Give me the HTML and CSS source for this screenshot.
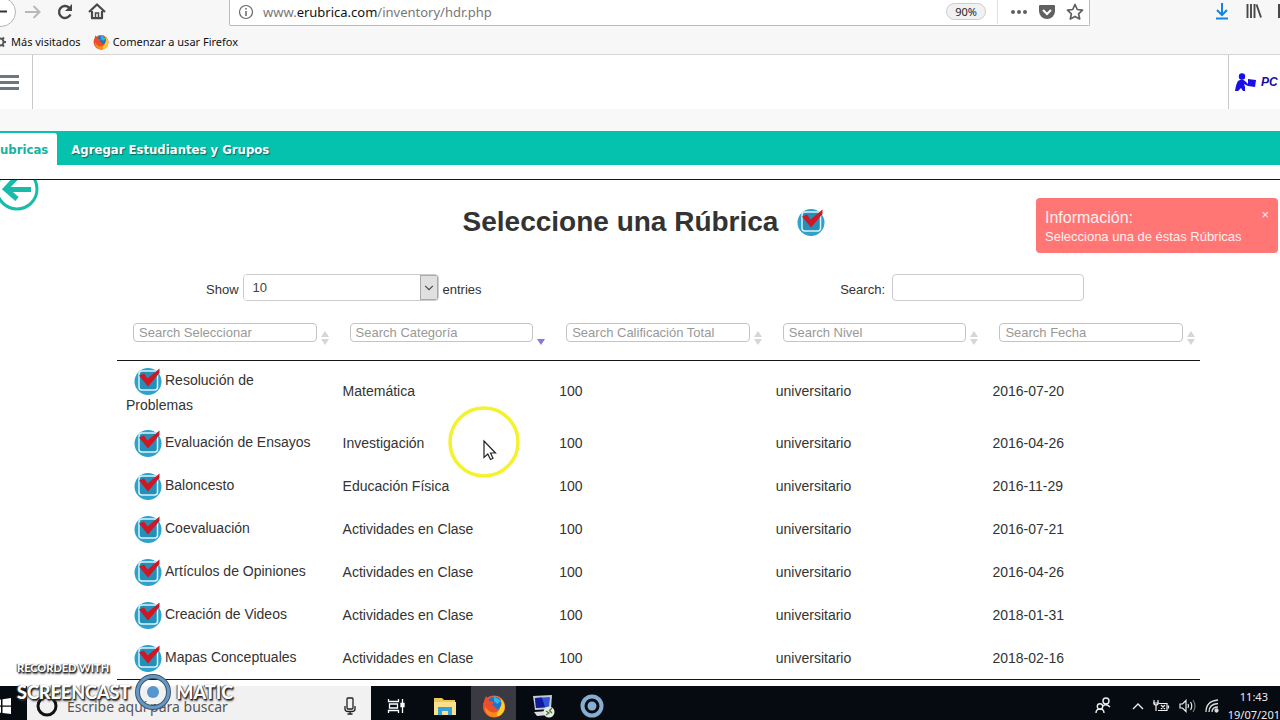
FILE: index.html
```html
<!DOCTYPE html>
<html lang="es">
<head>
<meta charset="utf-8">
<title>Rúbricas</title>
<link rel="stylesheet" href="styles.css">
</head>
<body>
<svg class="defs" aria-hidden="true">
  <defs>
    <symbol id="check" viewBox="0 0 28 28">
      <circle cx="14" cy="14.5" r="13.5" fill="#2ba3cb"/>
      <rect x="5" y="4" width="18.500" height="19" rx="3" fill="#258fb8" stroke="#d9f3fb" stroke-width="1.5"/>
      <path d="M5 8.500 L10 6.500 L13.500 11.500 L25.500 1.500 L25.500 6 L14 19.500 Z" fill="#cf1726"/>
    </symbol>
    <symbol id="fox" viewBox="0 0 24 24">
      <circle cx="12" cy="12.500" r="11" fill="#f0502a"/>
      <path d="M8 4 C13 -1 22 4 23 12 C23.500 19 17 24 11 23 C5 22 2 17 3 12 Z" fill="#fb8a1c"/>
      <path d="M19 5 C24 10 24 18 17 22 C12 23 17 16 18 12Z" fill="#ffcf2e"/>
      <circle cx="12.500" cy="9.500" r="7" fill="#2374c6"/>
      <path d="M12 2 L19 7 L15 10 L12 7Z" fill="#30b5e8"/>
      <path d="M1 11 C2 7 3 4 4 2 L7 7 L12 8 L10 11 L13 13 C14 16 17 15 18 14 C17 19 9 20 6 16Z" fill="#ee4c2a"/>
    </symbol>
    <symbol id="sort" viewBox="0 0 8 14"><path d="M4 0 L8 6 H0Z M0 8 H8 L4 14Z" fill="#d6d6d8"/></symbol>
    <symbol id="sorted" viewBox="0 0 8 14"><path d="M0 8 H8 L4 14Z" fill="#8479dc"/></symbol>
  </defs>
</svg>

<div class="browser">
  <div class="toolbar">
    <div class="nav-buttons">
      <button class="bare" aria-label="Atrás"><svg width="16" height="28" viewBox="0 0 16 28"><circle cx="1" cy="12" r="14.500" fill="#fff" stroke="#b5b5b5"/><path d="M-4 11.500H7" stroke="#333" stroke-width="2"/></svg></button>
      <button class="bare" aria-label="Adelante"><svg width="18" height="24" viewBox="0 0 18 24"><path d="M1 12H15M9.500 6L15.500 12L9.500 18" fill="none" stroke="#b9b9b9" stroke-width="2"/></svg></button>
      <button class="bare" aria-label="Recargar"><svg width="18" height="24" viewBox="0 0 18 24"><path d="M14.500 14.500A6 6 0 1 1 13 7.500" fill="none" stroke="#484848" stroke-width="2.400"/><path d="M16 4V11H9Z" fill="#484848"/></svg></button>
      <button class="bare" aria-label="Inicio"><svg width="18" height="24" viewBox="0 0 18 24"><path d="M1 12L9 4.500L17 12M4 11V18.200H14V11" fill="none" stroke="#484848" stroke-width="2.200" stroke-linejoin="round"/><path d="M7.500 18V13H10.500V18" fill="none" stroke="#484848" stroke-width="1.500"/></svg></button>
    </div>
    <div class="urlbar">
      <svg width="16" height="16" viewBox="0 0 16 16"><circle cx="8" cy="8" r="6.500" fill="none" stroke="#666" stroke-width="1.200"/><path d="M8 7V12M8 4V5.500" stroke="#666" stroke-width="1.500"/></svg>
      <span class="url">www.<b>erubrica.com</b>/inventory/hdr.php</span>
      <button class="zoom">90%</button>
      <div class="url-actions">
        <svg width="18" height="18" viewBox="0 0 18 18" fill="#606060"><circle cx="3" cy="9" r="2"/><circle cx="9" cy="9" r="2"/><circle cx="15" cy="9" r="2"/></svg>
        <svg width="18" height="18" viewBox="0 0 18 18"><path d="M1 3Q1 2 2 2H16Q17 2 17 3V8A8 8 0 0 1 1 8Z" fill="#606060"/><path d="M5 7L9 11L13 7" fill="none" stroke="#fff" stroke-width="2"/></svg>
        <svg width="18" height="18" viewBox="0 0 18 18"><path d="M9 1.500L11.300 6.500L16.500 7.100L12.600 10.800L13.700 16L9 13.400L4.300 16L5.400 10.800L1.500 7.100L6.700 6.500Z" fill="none" stroke="#606060" stroke-width="1.700" stroke-linejoin="round"/></svg>
      </div>
    </div>
    <div class="tools">
      <svg width="16" height="20" viewBox="0 0 16 20"><path d="M8 2V14M3 9L8 14L13 9M2 17.500H14" fill="none" stroke="#1683e2" stroke-width="2"/></svg>
      <svg width="16" height="20" viewBox="0 0 16 20"><path d="M1.500 3V17M5 3V17M8.500 3V17M10.500 3.500L15 16.500" fill="none" stroke="#484848" stroke-width="1.900"/></svg>
      <svg width="2" height="20" viewBox="0 0 2 20"><path d="M1 3V17" stroke="#484848" stroke-width="2"/></svg>
    </div>
  </div>
  <div class="bookmarks">
    <a href="#"><svg width="7" height="14" viewBox="0 0 7 14"><circle cx="0" cy="7" r="3.500" fill="none" stroke="#555" stroke-width="2"/><path d="M3 7H6M2 4.500L4 2.500M2 9.500L4 11.500" stroke="#555" stroke-width="2"/></svg>Más visitados</a>
    <a href="#"><svg width="16" height="16"><use href="#fox"/></svg>Comenzar a usar Firefox</a>
  </div>
</div>

<header class="site-header">
  <button class="menu" aria-label="Menú"><span></span><span></span><span></span></button>
  <a class="brand" href="#"><svg width="21" height="18" viewBox="0 0 21 18" fill="#1a0fe8"><circle cx="7" cy="3.500" r="3.200"/><path d="M3 8Q7 5 10 8L13 11H17L13 13L9 11L10 14V18H8L6 15L3 18H0Q1 11 3 8Z"/><path d="M13 6L21 7L20 14L13 13Z"/></svg><span>PC</span></a>
</header>

<nav class="tabs">
  <a class="tab active" href="#">ubricas</a>
  <a class="tab" href="#">Agregar Estudiantes y Grupos</a>
</nav>

<main class="content">
  <button class="back bare" aria-label="Volver"><svg width="40" height="32" viewBox="0 0 40 32"><circle cx="17" cy="9" r="20" fill="#fff" stroke="#16bca8" stroke-width="3"/><path d="M31 9.500H6" stroke="#16bca8" stroke-width="5"/><path d="M16 -2L5.500 9L17 19" fill="none" stroke="#16bca8" stroke-width="5"/></svg></button>
  <aside class="toast">
    <div><strong>Información:</strong><p>Selecciona una de éstas Rúbricas</p></div>
    <button class="bare" aria-label="Cerrar">×</button>
  </aside>
  <h1>Seleccione una Rúbrica <svg width="28" height="28"><use href="#check"/></svg></h1>

  <section class="data">
    <div class="controls">
      <label>Show
        <span class="select"><select><option>10</option><option>25</option></select><svg width="18" height="27" viewBox="0 0 18 27"><path d="M4.500 11.500L9 16L13.500 11.500" fill="none" stroke="#444" stroke-width="1.300"/></svg></span>
        entries</label>
      <label class="find">Search: <input type="search"></label>
    </div>
    <table>
      <thead>
        <tr>
          <th><div><input placeholder="Search Seleccionar" aria-label="Seleccionar"><svg width="8" height="14"><use href="#sort"/></svg></div></th>
          <th><div><input placeholder="Search Categoría" aria-label="Categoría"><svg width="8" height="14"><use href="#sorted"/></svg></div></th>
          <th><div><input placeholder="Search Calificación Total" aria-label="Calificación Total"><svg width="8" height="14"><use href="#sort"/></svg></div></th>
          <th><div><input placeholder="Search Nivel" aria-label="Nivel"><svg width="8" height="14"><use href="#sort"/></svg></div></th>
          <th><div><input placeholder="Search Fecha" aria-label="Fecha"><svg width="8" height="14"><use href="#sort"/></svg></div></th>
        </tr>
      </thead>
      <tbody>
        <tr><td><svg width="28" height="28"><use href="#check"/></svg>Resolución de Problemas</td><td>Matemática</td><td>100</td><td>universitario</td><td>2016-07-20</td></tr>
        <tr><td><svg width="28" height="28"><use href="#check"/></svg>Evaluación de Ensayos</td><td>Investigación</td><td>100</td><td>universitario</td><td>2016-04-26</td></tr>
        <tr><td><svg width="28" height="28"><use href="#check"/></svg>Baloncesto</td><td>Educación Física</td><td>100</td><td>universitario</td><td>2016-11-29</td></tr>
        <tr><td><svg width="28" height="28"><use href="#check"/></svg>Coevaluación</td><td>Actividades en Clase</td><td>100</td><td>universitario</td><td>2016-07-21</td></tr>
        <tr><td><svg width="28" height="28"><use href="#check"/></svg>Artículos de Opiniones</td><td>Actividades en Clase</td><td>100</td><td>universitario</td><td>2016-04-26</td></tr>
        <tr><td><svg width="28" height="28"><use href="#check"/></svg>Creación de Videos</td><td>Actividades en Clase</td><td>100</td><td>universitario</td><td>2018-01-31</td></tr>
        <tr><td><svg width="28" height="28"><use href="#check"/></svg>Mapas Conceptuales</td><td>Actividades en Clase</td><td>100</td><td>universitario</td><td>2018-02-16</td></tr>
      </tbody>
    </table>
  </section>
</main>

<footer class="taskbar">
  <button class="start bare" aria-label="Inicio"><svg width="11" height="16" viewBox="0 0 11 16" fill="#fff"><path d="M0 1.500L1 1.400V7.500H0ZM2.500 1.200L11 0V7.500H2.500ZM0 8.800H1V14.800H0ZM2.500 8.800H11V16L2.500 15Z"/></svg></button>
  <div class="search">
    <svg width="22" height="22" viewBox="0 0 22 22"><circle cx="11" cy="11" r="9" fill="none" stroke="#111" stroke-width="3"/></svg>
    <input placeholder="Escribe aquí para buscar" aria-label="Buscar">
    <svg width="14" height="18" viewBox="0 0 14 18" fill="none" stroke="#222" stroke-width="1.300"><rect x="4" y="1" width="6" height="11" rx="1"/><path d="M2 9V12Q2 14.500 5 14.500H9Q12 14.500 12 12V9M7 14.500V17M4.500 17H9.500"/></svg>
  </div>
  <div class="apps">
    <button class="bare" aria-label="Vista de tareas"><svg width="18" height="18" viewBox="0 0 18 18" fill="none" stroke="#fff" stroke-width="1.300"><path d="M1.500 2V4.500H11.500V2M1.500 16V13.500H11.500V16M2.500 7H10.500V11H2.500ZM15.500 2V16"/><path d="M14 6.500H17V9.500H14Z" fill="#fff"/></svg></button>
    <button class="bare" aria-label="Explorador"><svg width="22" height="20" viewBox="0 0 22 20"><path d="M0 2H8L10 4H21V19H0Z" fill="#efc65a"/><path d="M0 6H22V19H0Z" fill="#fbe08c"/><path d="M4 19V11H18V19H14V15H8V19Z" fill="#35a3da"/></svg></button>
    <button class="bare current" aria-label="Firefox"><svg width="24" height="24"><use href="#fox"/></svg></button>
    <button class="bare" aria-label="Escritorio remoto"><svg width="24" height="24" viewBox="0 0 24 24"><path d="M2 2L21 1L20 15L4 16Z" fill="#c4cbdc"/><path d="M4 4L19 3L18 13L5 14Z" fill="#3157d5"/><path d="M4 4L11 3.500L14 13.300L5 14Z" fill="#101b9c"/><path d="M3 18L16 17L18 21L6 22Z" fill="#d9dbe0"/><circle cx="18" cy="18" r="5.500" fill="#e6ecdf"/><path d="M15 17L18 19L15 21M21 14L18.500 16.500L21 19" fill="none" stroke="#49743c" stroke-width="1.300"/></svg></button>
    <button class="bare" aria-label="Grabador"><svg width="24" height="24" viewBox="0 0 24 24"><circle cx="12" cy="12" r="9.500" fill="none" stroke="#86aed3" stroke-width="4"/><circle cx="12" cy="12" r="4.500" fill="#86aed3"/></svg></button>
  </div>
  <div class="tray">
    <svg width="16" height="18" viewBox="0 0 16 18" fill="none" stroke="#eee" stroke-width="1.400"><circle cx="11" cy="4" r="3"/><circle cx="5" cy="9.500" r="2.700"/><path d="M1 16Q1 12 5 12T9 16M8 9Q11 6 15 10"/></svg>
    <svg width="12" height="8" viewBox="0 0 12 8"><path d="M1 7L6 2L11 7" fill="none" stroke="#eee" stroke-width="1.400"/></svg>
    <svg width="17" height="14" viewBox="0 0 17 14" fill="none" stroke="#eee" stroke-width="1.200"><path d="M1 1V5Q3 7 5 5V1M0 4H6M3 6V12M6 4.500H14V11.500H5M15.500 6.500V9.500M8 6L12 10M12 6L8 10"/></svg>
    <svg width="17" height="14" viewBox="0 0 17 14" fill="none" stroke="#eee" stroke-width="1.200"><path d="M1 5H3.500L7 1.500V12.500L3.500 9H1ZM9 5Q10 7 9 9M11.500 3Q14 7 11.500 11"/><path d="M14 1Q18 7 14 13" stroke="#777"/></svg>
    <svg width="14" height="14" viewBox="0 0 14 14" fill="none" stroke="#ddd" stroke-width="1.300"><path d="M1 13Q1 2 13 1M4 13Q4 5 13 4.500M7 13Q7 8 13 8"/><circle cx="11.500" cy="11.500" r="1.500" fill="#ddd"/></svg>
    <div class="clock"><span>11:43</span><span>19/07/201</span></div>
  </div>
</footer>

<div class="watermark">
  <span class="small">RECORDED WITH</span>
  <div><span>SCREENCAST</span><svg width="36" height="36" viewBox="0 0 36 36"><circle cx="18" cy="18" r="15.500" fill="none" stroke="#3c566d" stroke-width="5"/><circle cx="18" cy="18" r="15.500" fill="none" stroke="#6598c5" stroke-width="3"/><circle cx="18" cy="18" r="6" fill="#5795ce"/></svg><span>MATIC</span></div>
</div>
<svg class="pointer" width="74" height="74" viewBox="0 0 74 74"><circle cx="37" cy="37" r="34" fill="none" stroke="#f4f22c" stroke-width="3.500"/><path d="M37 36V52.500L40.800 49L43.500 54.500L46 53.300L43.500 48H48.500Z" fill="#fff" stroke="#222" stroke-width="1.200"/></svg>
</body>
</html>
```
FILE: styles.css
```css
* { box-sizing: border-box; }
html, body { height: 100%; }
body {
  margin: 0;
  display: flex;
  flex-direction: column;
  overflow: hidden;
  background: #fff;
  color: #333;
  font: 14px/20px "Liberation Sans", Arial, sans-serif;
}
svg { flex: none; }
a { color: inherit; text-decoration: none; }
.defs { position: absolute; width: 0; height: 0; }
.bare { display: flex; padding: 0; border: 0; background: none; color: inherit; }

.browser { flex: none; background: #f7f7f8; border-bottom: 1px solid #d5d5d7; color: #111; font-family: "Noto Sans", sans-serif; }
.toolbar { display: flex; height: 28px; align-items: flex-start; }
.nav-buttons { display: flex; gap: 14px; width: 229px; }
.nav-buttons .bare:first-child { margin-right: -6px; }
.urlbar {
  flex: 1;
  display: flex;
  align-items: center;
  height: 26px;
  padding: 0 5px 2px 8px;
  background: #fff;
  border: 1px solid #bbb;
  border-top: 0;
  border-radius: 0 0 2px 2px;
}
.url { flex: 1; margin-left: 9px; color: #777; font-size: 13px; }
.url b { color: #111; font-weight: 400; }
.zoom { height: 17px; padding: 0 8px; margin-right: 11px; border: 1px solid #ccc; border-radius: 9px; background: #f1f1f3; font: 11px/15px "Noto Sans", sans-serif; color: #222; }
.url-actions { display: flex; gap: 10px; height: 24px; align-items: center; padding-left: 12px; border-left: 1px solid #e0e0e0; }
.tools { display: flex; justify-content: flex-end; gap: 16px; width: 190px; padding-top: 1px; }
.bookmarks { display: flex; gap: 12px; height: 26px; align-items: center; padding-top: 2px; font-size: 11px; }
.bookmarks a { display: flex; gap: 4px; align-items: center; }

.site-header { flex: none; display: flex; justify-content: space-between; height: 54px; background: #fff; }
.menu { display: flex; flex-direction: column; justify-content: center; gap: 3px; width: 33px; padding: 0; border: 0; border-right: 1px solid #c9c9c9; background: none; }
.menu span { width: 19px; height: 3px; background: #687780; }
.brand { display: flex; gap: 5px; align-items: center; width: 52px; padding-left: 6px; border-left: 1px solid #c9c9c9; overflow: hidden; color: #1b0ca0; font-size: 12px; font-style: italic; font-weight: 700; }

.tabs { flex: none; display: flex; height: 34px; margin: 22px 0 14px; background: #04c2ae; box-shadow: 0 -22px #f8f8f9; font: bold 13px/38px "DejaVu Sans Condensed", "DejaVu Sans", sans-serif; }
.tab { padding: 0 14px; color: #fff; text-shadow: 1px 1px 1px #16655d; }
.active { margin-top: 2px; padding: 0 9px 0 0; border-radius: 0 3px 0 0; background: #fff; color: #14b3a0; line-height: 34px; text-shadow: none; }

.content { flex: 1; min-height: 0; overflow: hidden; position: relative; border-top: 1px solid #161616; }
.back { position: absolute; left: 0; top: 0; }
.toast {
  position: absolute;
  top: 18px;
  right: 2px;
  display: flex;
  justify-content: space-between;
  width: 242px;
  padding: 10px 9px 7px;
  border-radius: 4px;
  background: #ff7675;
  color: #fff0f0;
  font-size: 13px;
  line-height: 18px;
}
.toast strong { display: block; font-size: 16px; line-height: 20px; font-weight: 400; }
.toast p { margin: 0; }
.toast .bare { font-size: 13px; line-height: 14px; }
h1 { display: flex; gap: 19px; justify-content: center; align-items: center; margin: 26px 0 36px 8px; font-size: 28px; line-height: 32px; }

.data { margin: 0 80px 0 117px; }
.controls { display: flex; justify-content: space-between; height: 27px; padding: 0 116px 0 89px; font-size: 13px; line-height: 32px; }
.controls label { display: flex; gap: 4px; align-items: flex-start; }
.controls .find { gap: 7px; }
.select { display: flex; width: 196px; height: 27px; border: 1px solid #ccc; border-radius: 4px; overflow: hidden; }
.select select { flex: 1; height: 25px; appearance: none; padding: 0 9px; border: 0; background: #fff; color: #444; font: 13px "Liberation Sans", Arial, sans-serif; }
.select svg { background: #e0e0e0; border: 1px solid #aaa; height: 25px; }
.find input { width: 192px; height: 27px; border: 1px solid #ccc; border-radius: 4px; background: #fff; }

table { width: 100%; table-layout: fixed; border-collapse: separate; border-spacing: 0; border-bottom: 1px solid #161616; }
th { padding: 22px 5px 15px 16px; border-bottom: 1px solid #161616; }
th div { display: flex; gap: 4px; align-items: flex-start; }
th svg { margin-top: 8px; }
th input { flex: 1; min-width: 0; height: 19px; padding: 0 6px 1px 5px; border: 1px solid #c4c4c4; border-radius: 4px; font: 13px "Liberation Sans", Arial, sans-serif; }
th input::placeholder { color: #999; opacity: 1; }
td { height: 43px; padding: 6px 9px; vertical-align: middle; }
td:first-child { padding-right: 20px; }
td svg { margin: 0 3px 0 8px; vertical-align: middle; }

.taskbar { flex: none; display: flex; height: 34px; background: #060a11; color: #eee; font-family: "Noto Sans", sans-serif; }
.start { width: 27px; align-items: center; padding-top: 6px; }
.search { display: flex; align-items: center; width: 344px; padding: 6px 14px 0 9px; background: #f1f1f1; }
.search input { flex: 1; min-width: 0; margin-left: 9px; padding: 0; border: 0; background: none; font: 14px "Noto Sans", sans-serif; }
.search input::placeholder { color: #555; opacity: 1; }
.apps { display: flex; flex: 1; gap: 4px; padding-left: 2px; }
.apps .bare { width: 45px; align-items: center; justify-content: center; padding-top: 5px; }
.apps .current { background: #3a3b42; }
.tray { display: flex; gap: 9px; align-items: center; padding-top: 6px; }
.tray svg:first-child { margin-right: 12px; }
.clock { display: flex; flex-direction: column; align-items: center; font-size: 11px; line-height: 18px; }

.watermark { position: absolute; left: 17px; bottom: 10px; color: #fff; font: 900 18px/36px Lato, sans-serif; text-shadow: 1px 1px 1px #222, -1px 0 1px #555, 1px 2px 2px #333; }
.watermark div { display: flex; gap: 5px; align-items: center; }
.watermark .small { display: block; font-size: 11px; line-height: 12px; }
.pointer { position: absolute; left: 447px; top: 405px; }
```
